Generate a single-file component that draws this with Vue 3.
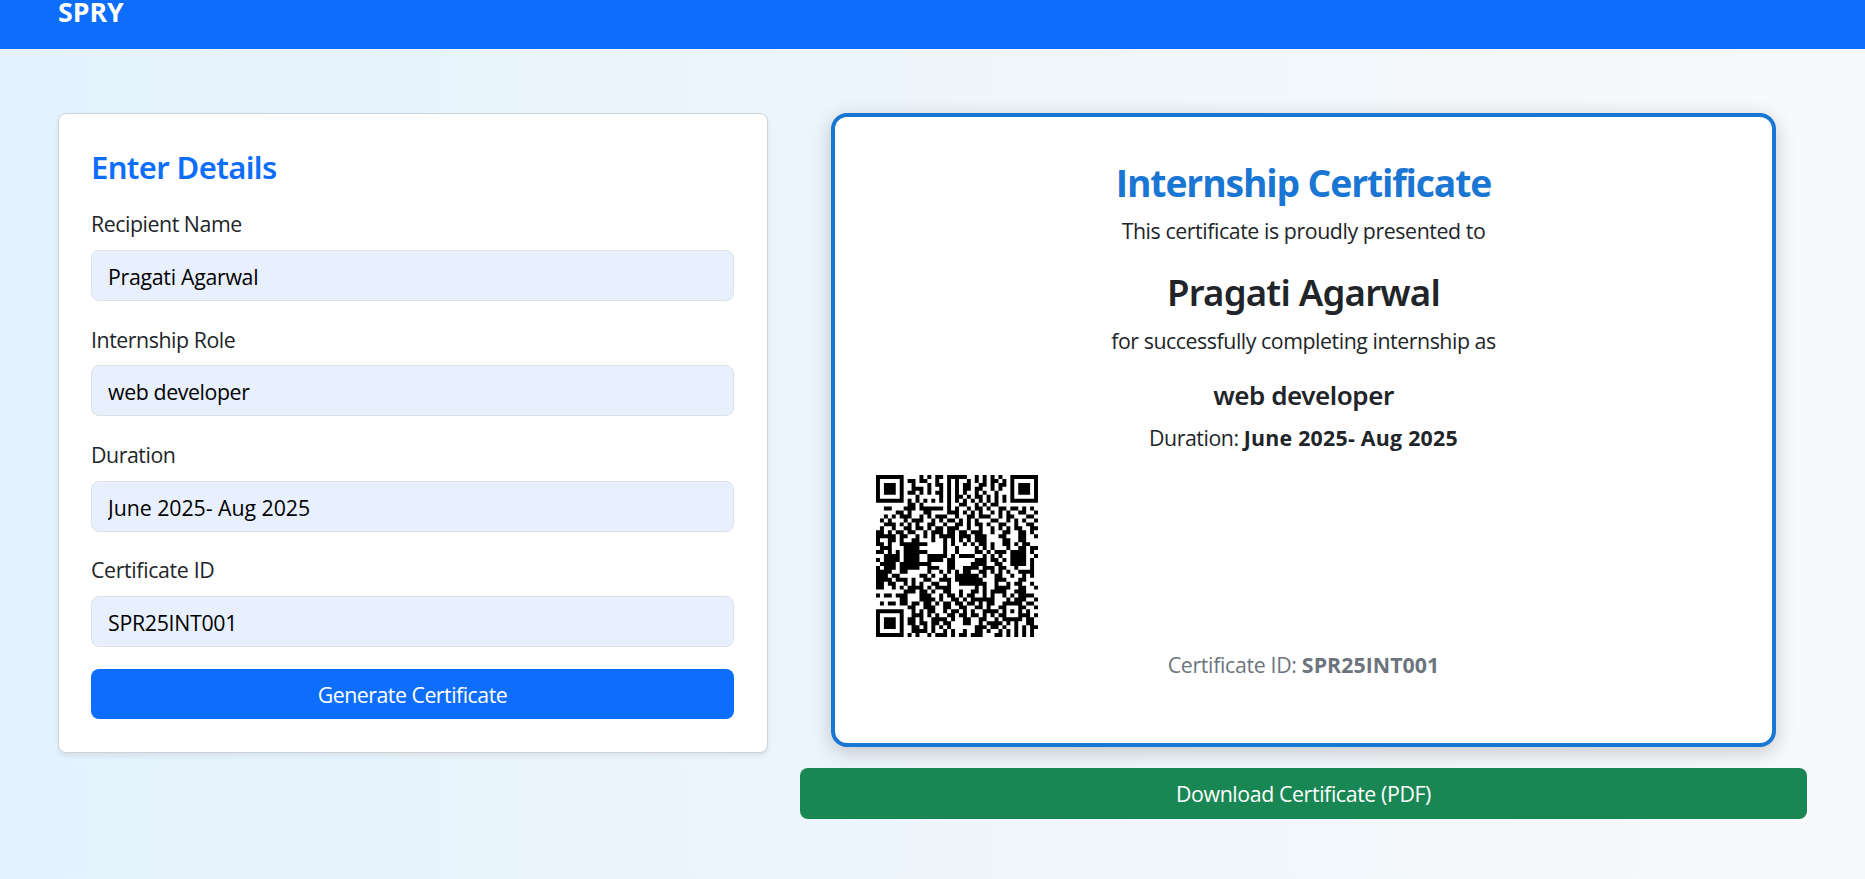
<script setup>
import { reactive } from 'vue'

const form = reactive({
  name: 'Pragati Agarwal',
  role: 'web developer',
  duration: 'June 2025- Aug 2025',
  certId: 'SPR25INT001',
})

const fields = [
  { key: 'name', label: 'Recipient Name' },
  { key: 'role', label: 'Internship Role' },
  { key: 'duration', label: 'Duration' },
  { key: 'certId', label: 'Certificate ID' },
]

// One string per module row, "#" is a dark module.
const modules = [
  '#######....#.#.##.#####..#.#.#.#..#######',
  '#.....#.##.##..#..#.#..#.#.#.##.#.#.....#',
  '#.###.#..#...#.##.#.#.##..##.#.##.#.###.#',
  '#.###.#..###.#..#.#.#.##.##..#.#..#.###.#',
  '#.###.#.##.#.#.##.#.#.#..#.#..#...#.###.#',
  '#.....#...#.....#.#.##.#.##.#.#.#.#.....#',
  '#######.#.#.#.#.#.#.#.#.#.#.#.#.#.#######',
  '........##.#......#..##..#.#.##..........',
  '..##...###.######.#.#..#.##.#..##.##.#.#.',
  '.....##.#...##....###.#.#.#..#.#.#..##..#',
  '..#.#.###..#.#.###..#..##.###..#.##...##.',
  '.#.#...#.###..#.#.##.#.#.#...##..#.#.#..#',
  '..###.#.#.#..##..#..##.#.##.#..##..#..##.',
  '.#..#..##.##.#.##.###..#..#..#.#.#.##..##',
  '##.#.##.##..#.###.##.##.###..#..##..##.#.',
  '#####.##..#.#.#.####.###.###...##...##..#',
  '#..##.#..##...#..#.#.#.#.###....##..##...',
  '##.#..#######....#.#..#.#.##.#..##.#.##..',
  '.###...####......#..#....#.#.#...#..##.##',
  '##.#.#.######....#..#....##.#.###.####.#.',
  '..####.####..#####.#.####..#.#.#..####..#',
  '#.####.####..####.##.....###.##.#.####.#.',
  '.####.########....##....####..##..####.#.',
  '#.###.#####..###..##..####.###.##..#...#.',
  '####..##.....#..#.#.#.##..##.#.#.#..####.',
  '###.##.....##.#..#..######.#..##..#..#.#.',
  '####.###.#..##..###.#######...###...##...',
  '##.##..#.#.#..##..#..#######..#..#.##..#.',
  '##..#.#.####.#.####......#.#..####..##..#',
  '.......###.##.#..##..#..##.#.####..###...',
  '#.##.###...###..#.##.#.##..#.#..#.#.####.',
  '......##...####.#..##.#.######...#.###..#',
  '.#.##.##.##.##.#.##.##.##.#.##..#####.##.',
  '........##..###..##..##..##.#..##...##..#',
  '#######..#.#.##..#.##.#.#..####.#.#.#.#..',
  '#.....#..###.#.#..##.##.##.#.#.##...###.#',
  '#.###.#.##.#..####.#..##..##..#.#####.##.',
  '#.###.#.##.##.##.##...##..#.####.#.#..##.',
  '#.###.#..##.#.#.#.#......###.##.#..#.#.##',
  '#.....#..####.#..#.#..#..##.#..#.#.#.#.#.',
  '#######.#.#..#.###.#.##.###...##.#.#.#.#.',
]

// Horizontal runs of dark modules merged into path rectangles.
const qrPath = modules
  .map((row, y) =>
    [...row.matchAll(/#+/g)].map((m) => `M${m.index} ${y}h${m[0].length}v1h-${m[0].length}z`).join('')
  )
  .join('')
</script>

<template>
  <div class="page">
    <nav class="navbar"><span class="brand">SPRY</span></nav>
    <main class="content">
      <form class="card" @submit.prevent>
        <h4 class="card-title">Enter Details</h4>
        <div v-for="f in fields" :key="f.key" class="field" :class="f.key">
          <label :for="f.key">{{ f.label }}</label>
          <input :id="f.key" v-model="form[f.key]" type="text" />
        </div>
        <button class="btn primary" type="submit">Generate Certificate</button>
      </form>

      <section class="preview">
        <article class="certificate">
          <h2 class="heading">Internship Certificate</h2>
          <p class="presented">This certificate is proudly presented to</p>
          <h3 class="recipient">{{ form.name }}</h3>
          <p class="completing">for successfully completing internship as</p>
          <h5 class="role-name">{{ form.role }}</h5>
          <p class="period">Duration: <strong>{{ form.duration }}</strong></p>
          <svg class="qr" viewBox="0 0 41 41" aria-label="QR code">
            <path :d="qrPath" />
          </svg>
          <p class="cert-id">Certificate ID: <strong>{{ form.certId }}</strong></p>
        </article>
        <button class="btn success" type="button">Download Certificate (PDF)</button>
      </section>
    </main>
  </div>
</template>

<style>
body {
  margin: 0;
  overflow: hidden;
}
</style>

<style scoped>
* {
  box-sizing: border-box;
}
.page {
  height: 879px;
  overflow: hidden;
  background: linear-gradient(to right, #e3f2fd, #f8f9fa);
  color: #212529;
  font-family: "Open Sans", "Noto Sans", sans-serif;
  font-size: 21.33px;
  line-height: 32px;
}
h2, h3, h4, h5, p {
  margin: 0;
}
.navbar {
  height: 49px;
  padding: 0 58px;
  background: #0d6efd;
}
.brand {
  display: block;
  color: #fff;
  font-size: 26.67px;
  font-weight: 700;
  line-height: 24px;
}
.content {
  display: flex;
  align-items: flex-start;
  gap: 32px;
  padding: 64px 58px 0;
}
.card {
  width: 710px;
  height: 640px;
  padding: 32px 33px 32px 32px;
  background: #fff;
  border: 1px solid #cfd3d6;
  border-radius: 8px;
  box-shadow: 0 3px 5px rgba(0, 0, 0, 0.075);
}
.card-title {
  margin-bottom: 18.3px;
  color: #0d6efd;
  font-family: "Noto Sans", sans-serif;
  font-size: 31px;
  font-weight: 600;
  line-height: 43px;
  letter-spacing: -0.62px;
}
.field {
  height: 115.3px;
}
.field label {
  display: block;
  height: 42.7px;
  padding-top: 1px;
  letter-spacing: -0.45px;
}
.field input {
  display: block;
  width: 100%;
  height: 51px;
  padding: 2px 16px 0;
  border: 1px solid #dee2e6;
  border-radius: 8px;
  background: #e8f0fe;
  color: #000;
  font: inherit;
  letter-spacing: -0.3px;
}
.role input {
  letter-spacing: -0.4px;
}
.duration input {
  letter-spacing: -0.05px;
}
.certId label {
  letter-spacing: -0.35px;
}
.btn {
  display: block;
  width: 100%;
  height: 50px;
  padding: 1px 0 0;
  border: 0;
  border-radius: 8px;
  color: #fff;
  font: inherit;
}
.primary {
  margin-top: 1px;
  background: #0d6efd;
  letter-spacing: -0.5px;
}
.preview {
  flex: 1;
}
.certificate {
  height: 634px;
  margin: 0 31px 21px;
  padding: 41px;
  background: #fff;
  border: 4px solid #1976d2;
  border-radius: 16px;
  box-shadow: 0 5px 20px rgba(0, 0, 0, 0.2);
  text-align: center;
}
.heading {
  color: #1976d2;
  font-size: 37.3px;
  font-weight: 700;
  line-height: 49px;
  letter-spacing: -1.13px;
}
.presented {
  margin-top: 8px;
  letter-spacing: -0.42px;
}
.recipient {
  margin-top: 22px;
  font-family: "Noto Sans", sans-serif;
  font-size: 36.6px;
  font-weight: 600;
  line-height: 46px;
  letter-spacing: -0.8px;
}
.completing {
  margin-top: 10px;
  letter-spacing: -0.45px;
}
.role-name {
  margin-top: 21px;
  font-family: "Noto Sans", sans-serif;
  font-size: 26px;
  font-weight: 600;
  line-height: 34px;
  letter-spacing: -0.45px;
}
.period {
  margin-top: 10px;
  letter-spacing: -0.45px;
}
.period strong {
  letter-spacing: 0.25px;
}
.qr {
  display: block;
  width: 162px;
  height: 162px;
  margin: 21px 0 12px;
}
.cert-id {
  color: #6c757d;
  letter-spacing: -0.33px;
}
.cert-id strong {
  letter-spacing: 0.05px;
}
.success {
  height: 51px;
  background: #198754;
  letter-spacing: -0.4px;
}
</style>
